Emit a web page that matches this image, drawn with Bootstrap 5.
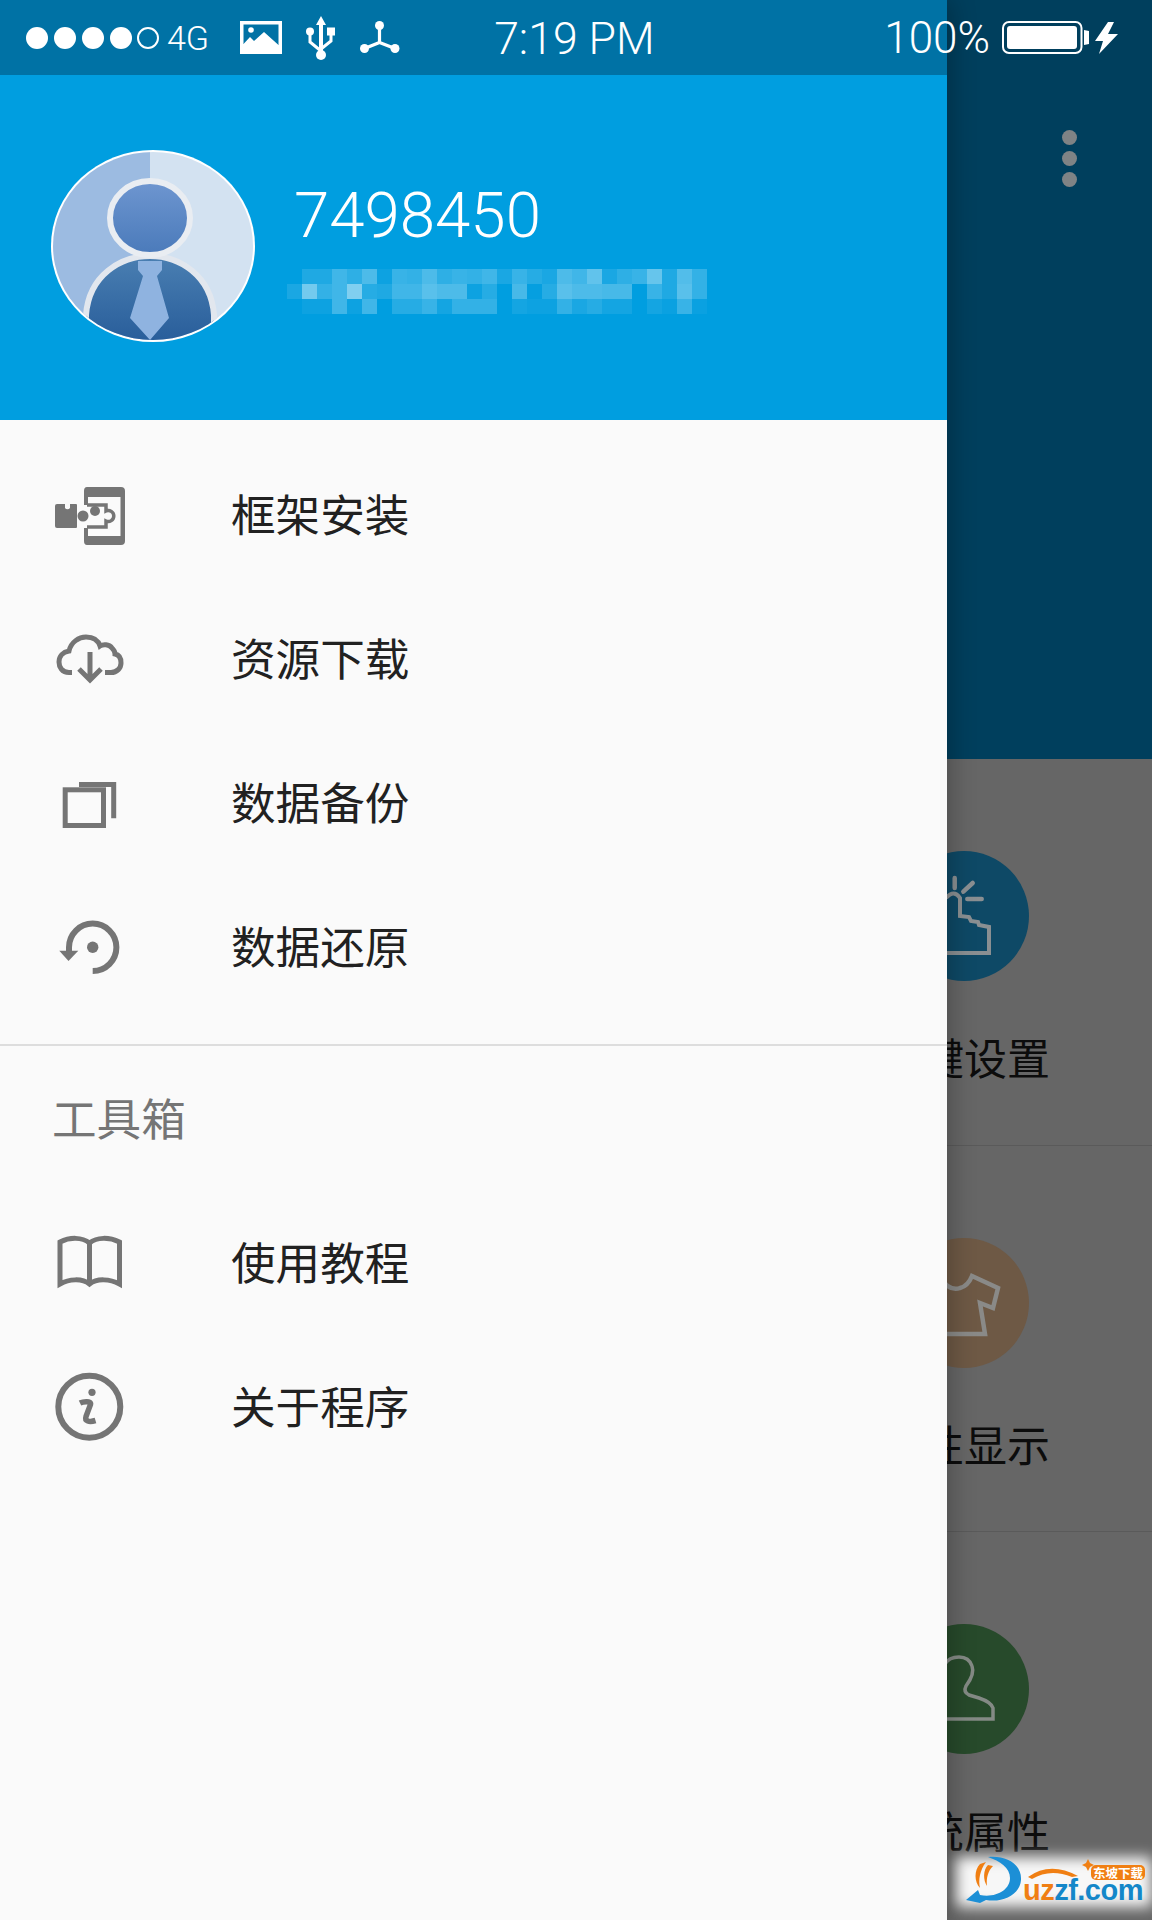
<!DOCTYPE html>
<html lang="zh-CN">
<head>
  <meta charset="UTF-8">
  <meta name="viewport" content="width=device-width, initial-scale=1.0">
  <title>Xposed</title>
  <link href="https://cdn.jsdelivr.net/npm/bootstrap@5.3.0/dist/css/bootstrap.min.css" rel="stylesheet">
  <style>
    body {
      background: #666;
      font-family: "Noto Sans CJK SC", "Noto Sans", sans-serif;
    }
    .screen {
      width: 1152px;
      height: 1920px;
      overflow: hidden;
    }

    /* app behind the drawer */
    .app-top {
      height: 759px;
      background: #003f5d;
      padding: 130px 75px 0 0;
      gap: 6px;
    }
    .more-dot {
      width: 15px;
      height: 15px;
      background: #7f8385;
    }
    .app-row {
      height: 387px;
      padding: 92px 0 0 776px;
      border-top: 1px solid #5a5a5a;
      margin-top: -1px;
    }
    .app-row.first-row { border-top: 0; margin-top: 0; }
    .app-disc {
      width: 130px;
      height: 130px;
    }
    .disc-blue { background: #0e4966; }
    .disc-brown { background: #6e5945; }
    .disc-green { background: #274a2b; }
    .app-label {
      margin-top: 45px;
      font-size: 43px;
      line-height: 60px;
      color: #0c0c0c;
    }

    /* drawer */
    .drawer {
      width: 947px;
      height: 1920px;
      background: #fafafa;
      box-shadow: 6px 0 22px rgba(0, 0, 0, .22);
    }
    .drawer-tint {
      height: 75px;
      background: #0072a5;
    }
    .drawer-head {
      height: 345px;
      padding: 0 0 4px 51px;
      background: #009ee0;
    }
    .avatar-svg { flex: none; }
    .user-box { margin-left: 39px; padding-top: 8px; }
    .user-id {
      font-family: Roboto, "Liberation Sans", sans-serif;
      font-weight: 300;
      font-size: 63.6px;
      line-height: 60px;
      color: #fff;
    }
    .blur-mail {
      display: grid;
      grid-template-columns: repeat(28, 15px);
      grid-auto-rows: 15px;
      margin: 23px 0 0 -7px;
    }
    .blur-mail span { background: #fff; }
    .drawer-menu { margin-top: 23px; }
    .drawer-menu .list-group-item {
      height: 144px;
      padding: 0 0 0 50px;
      background: transparent;
      border: 0;
      font-size: 44.6px;
      color: #212121;
    }
    .main-menu span { margin-bottom: 4px; }
    .menu-ico { flex: none; margin-right: 101px; }
    .drawer-line {
      height: 2px;
      margin-top: 25px;
      background: #ddd;
    }
    .drawer-section {
      margin: 41px 0 42px 52px;
      font-size: 44.6px;
      line-height: 60px;
      color: #757575;
    }
    .tools-menu { margin-top: 0; }

    /* status bar */
    .status-bar {
      height: 75px;
      padding: 0 32px 0 26px;
      color: #fff;
      font-family: Roboto, "Liberation Sans", sans-serif;
      font-weight: 300;
    }
    .sig-dot {
      width: 22px;
      height: 22px;
      margin-right: 6px;
      background: #fff;
    }
    .sig-empty {
      background: transparent;
      border: 2px solid #fff;
      margin-left: -1px;
      margin-right: 8px;
    }
    .net-type { font-size: 34px; line-height: 1; margin-right: 31px; }
    .status-time { font-size: 44.6px; line-height: 1; margin: 4px 0 0 94px; }
    .status-pct { font-size: 44px; line-height: 1; margin-left: auto; margin-right: 12px; }

    /* watermark */
    .wm-glow {
      right: 0;
      bottom: 13px;
      width: 196px;
      height: 50px;
      background: rgba(255, 255, 255, .95);
      filter: blur(7px);
    }
    .wm-logo {
      right: 6px;
      bottom: 16px;
      width: 180px;
      height: 48px;
    }
    .wm-name {
      right: 9px;
      bottom: 21px;
      font-family: "Liberation Sans", sans-serif;
      font-weight: 700;
      font-size: 29px;
      line-height: 18px;
      letter-spacing: -.5px;
      color: #1487c9;
    }
    .wm-name b { color: #f07f13; }
    .wm-tag {
      right: 7px;
      bottom: 40px;
      padding: 0 2px;
      background: #f07f13;
      border-radius: 5px;
      font-size: 12.5px;
      line-height: 15px;
      font-weight: 700;
      color: #fff;
    }
  </style>
</head>
<body class="m-0">
  <div class="screen position-relative">

    <!-- app content, mostly covered by the drawer -->
    <div class="app-top d-flex flex-column align-items-end">
      <span class="more-dot rounded-circle"></span>
      <span class="more-dot rounded-circle"></span>
      <span class="more-dot rounded-circle"></span>
    </div>
    <div class="app-row first-row d-flex flex-column align-items-center">
      <div class="app-disc disc-blue rounded-circle">
        <svg width="130" height="130" viewBox="0 0 130 130" fill="none" stroke="#8a8f92" stroke-width="4">
          <path d="M20 102 H90 V76 L80 74 L79 71 L72 70 L70 66 L61 65 V47 Q55 38 47 47"/>
          <path d="M55.7 27 V37 M73.7 32 L64.3 40.7 M68.3 48 H82.7" stroke-width="4.5" stroke-linecap="round"/>
        </svg>
      </div>
      <div class="app-label">按键设置</div>
    </div>
    <div class="app-row d-flex flex-column align-items-center">
      <div class="app-disc disc-brown rounded-circle">
        <svg width="130" height="130" viewBox="0 0 130 130" fill="none" stroke="#8a8a88" stroke-width="4.5">
          <path d="M40 38 Q50 54 61 50 Q69 48 73 38 L99 50 L94 70 L81 65 L86 96 H40"/>
        </svg>
      </div>
      <div class="app-label">个性显示</div>
    </div>
    <div class="app-row d-flex flex-column align-items-center">
      <div class="app-disc disc-green rounded-circle">
        <svg width="130" height="130" viewBox="0 0 130 130" fill="none" stroke="#848a85" stroke-width="3.5">
          <path d="M40 95 H94 V84 Q92 78 80 74 L70 71 Q64 68 67 62 Q76 50 73 42 Q70 33 60 33 Q50 33 46 40"/>
        </svg>
      </div>
      <div class="app-label">系统属性</div>
    </div>

    <!-- navigation drawer -->
    <div class="drawer position-absolute top-0 start-0">
      <div class="drawer-tint"></div>
      <div class="drawer-head d-flex align-items-center">
        <svg class="avatar-svg" width="204" height="192" viewBox="0 0 204 192">
          <defs>
            <clipPath id="avatarClip"><ellipse cx="102" cy="96" rx="100" ry="94"/></clipPath>
            <linearGradient id="headFill" x1="0" y1="0" x2="0" y2="1">
              <stop offset="0" stop-color="#6e96d0"/>
              <stop offset="1" stop-color="#4a7aba"/>
            </linearGradient>
            <linearGradient id="bodyFill" x1="0" y1="0" x2="0" y2="1">
              <stop offset="0" stop-color="#4a7fb2"/>
              <stop offset="1" stop-color="#255a98"/>
            </linearGradient>
          </defs>
          <ellipse cx="102" cy="96" rx="102" ry="96" fill="#fff"/>
          <g clip-path="url(#avatarClip)">
            <rect width="99" height="192" fill="#9cbbe1"/>
            <rect x="99" width="105" height="192" fill="#d3e2f1"/>
            <path d="M35 200 V165 C38 125 70 106 99 106 C128 106 160 125 163 165 V200 Z" fill="url(#bodyFill)" stroke="#e2e7ee" stroke-width="6"/>
            <path d="M87 111 H111 V120 L106 126 L118 168 L99 190 L79 168 L92 126 L87 120 Z" fill="#8fb3e0"/>
          </g>
          <ellipse cx="99" cy="68" rx="40" ry="37" fill="url(#headFill)" stroke="#e9edf2" stroke-width="6"/>
        </svg>
        <div class="user-box">
          <div class="user-id">7498450</div>
          <div class="blur-mail" id="blurMail"></div>
        </div>
      </div>

      <div class="list-group list-group-flush drawer-menu main-menu">
        <a class="list-group-item d-flex align-items-center">
          <svg class="menu-ico" width="80" height="80" viewBox="0 0 80 80">
            <g fill="#757575">
              <path d="M7 29 H15 V33 A3 3 0 0 0 20 33 V29 H26 Q27 29 27 30 V52 Q27 53 26 53 H7 Q5 53 5 51 V31 Q5 29 7 29 Z"/>
              <circle cx="33" cy="41" r="5.5"/>
              <circle cx="45" cy="36" r="5"/>
              <path d="M37 12 H71 Q75 12 75 16 V66 Q75 70 71 70 H37 Q34 70 34 66 V53 H38 V61 H70.5 V22 H38 V30 H34 V16 Q34 12 37 12 Z"/>
            </g>
            <path d="M37 30 H56 V36 A5.5 5.5 0 1 1 56 46 V52 H37" fill="none" stroke="#757575" stroke-width="3.5"/>
          </svg>
          <span>框架安装</span>
        </a>
        <a class="list-group-item d-flex align-items-center">
          <svg class="menu-ico" width="80" height="80" viewBox="0 0 80 80" fill="none" stroke="#757575" stroke-width="5">
            <path d="M22 53.5 H19 C12 53.5 9 48 9 43 C9 37 13 33 19 32 C21 23 29 18 36 18 C43 18 48 21 50 27 C53 25 59 25 62 29 C64 31 65 33 65 35 C70 36 71 41 71 44 C71 49 67 53.5 61 53.5 H55"/>
            <path d="M40 33 V60 M29 50 L40 61 L51 50"/>
          </svg>
          <span>资源下载</span>
        </a>
        <a class="list-group-item d-flex align-items-center">
          <svg class="menu-ico" width="80" height="80" viewBox="0 0 80 80" fill="none" stroke="#757575" stroke-width="5">
            <rect x="15.2" y="26.8" width="38.3" height="35.7"/>
            <path d="M29 21.5 H63.7 V55.3"/>
          </svg>
          <span>数据备份</span>
        </a>
        <a class="list-group-item d-flex align-items-center">
          <svg class="menu-ico" width="80" height="80" viewBox="0 0 80 80">
            <path d="M42.7 64 A23.7 23.7 0 1 0 19 40.3 V46" fill="none" stroke="#757575" stroke-width="6"/>
            <path d="M9.3 43.7 H28.3 L18.5 54 Z" fill="#757575"/>
            <circle cx="42.7" cy="40.3" r="5.7" fill="#757575"/>
          </svg>
          <span>数据还原</span>
        </a>
      </div>

      <div class="drawer-line"></div>
      <div class="drawer-section">工具箱</div>

      <div class="list-group list-group-flush drawer-menu tools-menu">
        <a class="list-group-item d-flex align-items-center">
          <svg class="menu-ico" width="80" height="80" viewBox="0 0 80 80" fill="none" stroke="#757575" stroke-width="5">
            <path d="M10 63 V21 C20 16 32 16 39.5 22 C47 16 59 16 69.5 21 V63 C60 58 47 57 39.5 63 C32 57 19 58 10 63 Z M39.5 22 V63"/>
          </svg>
          <span>使用教程</span>
        </a>
        <a class="list-group-item d-flex align-items-center">
          <svg class="menu-ico" width="80" height="80" viewBox="0 0 80 80" fill="none" stroke="#757575">
            <circle cx="39.3" cy="41.7" r="31" stroke-width="6"/>
            <circle cx="42" cy="27.3" r="3.6" fill="#757575" stroke="none"/>
            <path d="M30 38 C33 36.5 41.5 35.5 40.5 39.5 L36 51.5 C34.5 56 39 57.5 45.5 55.5" stroke-width="5.5"/>
          </svg>
          <span>关于程序</span>
        </a>
      </div>
    </div>

    <!-- status bar sits over both the drawer and the app -->
    <div class="status-bar position-absolute top-0 start-0 w-100 d-flex align-items-center">
      <span class="sig-dot rounded-circle"></span>
      <span class="sig-dot rounded-circle"></span>
      <span class="sig-dot rounded-circle"></span>
      <span class="sig-dot rounded-circle"></span>
      <span class="sig-dot sig-empty rounded-circle"></span>
      <span class="net-type">4G</span>
      <svg class="me-4" width="42" height="33" viewBox="0 0 42 33">
        <path fill="#fff" fill-rule="evenodd" d="M0 0 H42 V33 H0 Z M3.5 3.5 V23 L10 16 L14 20 L24 11 L38.5 24 V3.5 Z"/>
        <circle cx="11" cy="9" r="2.8" fill="#fff"/>
      </svg>
      <svg class="me-4" width="30" height="44" viewBox="0 0 30 44" fill="#fff">
        <path d="M15 0 L20 9 H17 V35 H13 V9 H10 Z"/>
        <circle cx="15" cy="39" r="5"/>
        <circle cx="4" cy="15.5" r="4"/>
        <rect x="21" y="11.5" width="8" height="8"/>
        <path d="M4 16 V26 L15 35 M25 16 V25 L15 33" fill="none" stroke="#fff" stroke-width="3"/>
      </svg>
      <svg width="40" height="33" viewBox="0 0 40 33" fill="#fff">
        <circle cx="19.5" cy="4.5" r="4.5"/>
        <circle cx="4.5" cy="27.5" r="4.5"/>
        <circle cx="35" cy="27.5" r="4.5"/>
        <path d="M19.5 5 V21.5 M4.5 27.5 L19.5 21.5 L35 27.5" fill="none" stroke="#fff" stroke-width="3.2"/>
      </svg>
      <span class="status-time">7:19 PM</span>
      <span class="status-pct">100%</span>
      <svg width="118" height="34" viewBox="0 0 118 34">
        <rect x="1" y="1" width="78.5" height="31" rx="6" fill="none" stroke="#fff" stroke-width="2"/>
        <rect x="5" y="5" width="70" height="23" rx="3" fill="#fff"/>
        <path d="M82 9 L87 10 V23 L82 24 Z" fill="#fff"/>
        <path d="M106 1 L93 20 H101 L97 33 L116 13 H106 L112 1 Z" fill="#fff"/>
      </svg>
    </div>

    <!-- download site watermark -->
    <div class="wm-glow position-absolute"></div>
    <svg class="wm-logo position-absolute" viewBox="0 0 180 48">
      <path d="M22 1 C40 -1 56 8 55 24 C54 38 38 47 20 44 L14 47 L0 44 L12 34 L14 39 C30 42 44 34 44 22 C44 12 34 5 22 1 Z" fill="#1c8fd6"/>
      <path d="M14 8 C8 14 8 26 14 32 C12 24 14 14 20 6 Z M22 9 C17 14 17 24 21 30 C20 22 22 15 27 10 Z" fill="#f07f13"/>
      <path d="M62 21 Q84 5 112 20 L106 21 Q84 12 66 23 Z" fill="#f07f13"/>
      <path d="M122 3 L124 7 L128 9 L124 11 L122 15 L120 11 L116 9 L120 7 Z" fill="#f07f13"/>
    </svg>
    <div class="wm-tag position-absolute">东坡下载</div>
    <div class="wm-name position-absolute"><b>uz</b>zf.com</div>
  </div>

  <script src="https://cdn.jsdelivr.net/npm/bootstrap@5.3.0/dist/js/bootstrap.bundle.min.js"></script>
  <script>
    // pixelated e-mail line, white alpha per cell (3 rows of 28)
    const blurCells = [
      0, .12, .12, .25, .18, .3, .05, .22, .2, .3, .18, .22, .2, .25, .1, .22, .15, .1, .3, .25, .38, .1, .18, .22, .4, .12, .32, .2,
      .1, .45, .2, .25, .5, .15, .12, .25, .25, .35, .3, .3, .05, .15, 0, .28, .02, .15, .35, .3, .3, .28, .28, 0, .22, .12, .35, .2,
      0, .05, .05, .25, .05, .25, 0, .15, .15, .22, .08, .2, .2, .2, 0, .08, .05, .05, .2, .1, .15, .08, .08, 0, .08, .04, .22, .04
    ];
    const blurMail = document.getElementById('blurMail');
    blurCells.forEach(alpha => {
      const cell = document.createElement('span');
      cell.style.opacity = alpha;
      blurMail.appendChild(cell);
    });
  </script>
</body>
</html>
